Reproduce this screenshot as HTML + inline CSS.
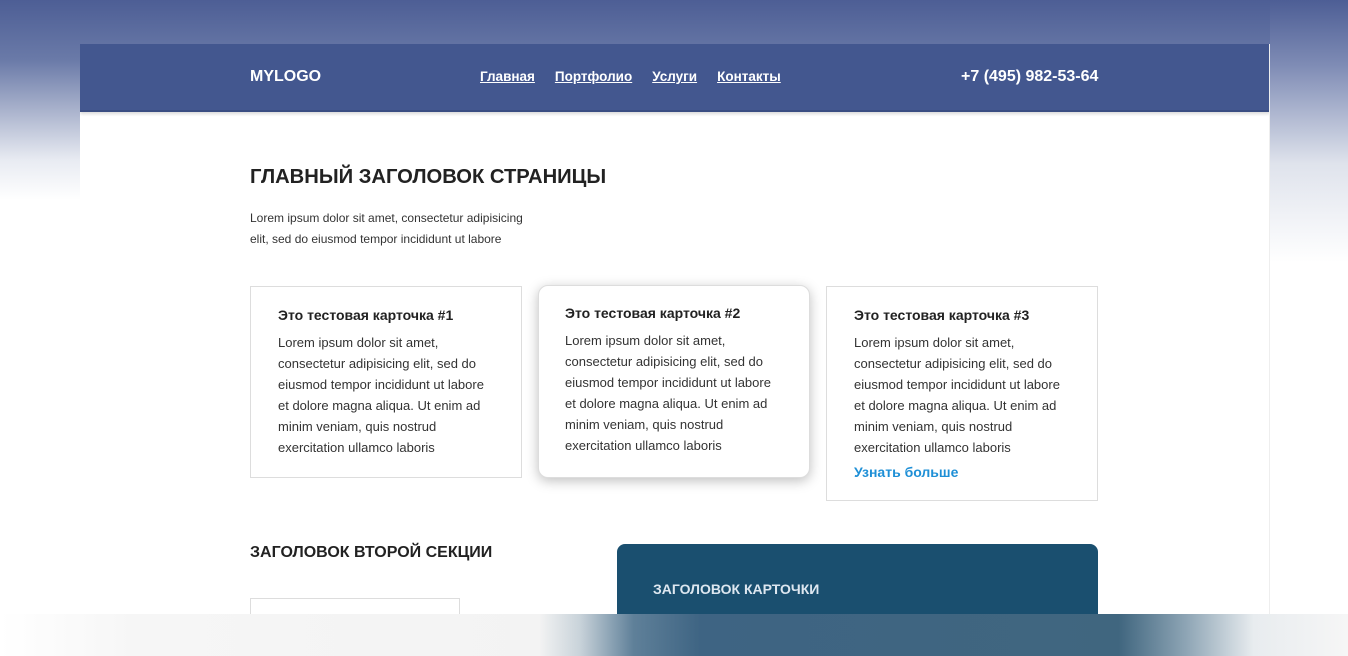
<!DOCTYPE html>
<html><head><meta charset="utf-8"><style>
*{margin:0;padding:0;box-sizing:border-box}
body{width:1348px;height:656px;overflow:hidden;position:relative;background:#fff;font-family:"Liberation Sans",Arial,sans-serif;color:#222}
.bgtop{position:absolute;left:0;top:0;width:1348px;height:200px;background:linear-gradient(180deg,#4d5e95 0%,#6a7aa8 30%,#a9b2cc 55%,#e8ebf2 80%,#fff 100%)}
.bgright{position:absolute;left:1270px;top:0;width:78px;height:656px;background:linear-gradient(180deg,#4d5e95 0%,#7f8cb5 10%,#dfe3ec 25%,#fff 40%,#fff 100%)}
.page{position:absolute;left:80px;top:44px;width:1190px;height:570px;background:#fff;overflow:hidden;border-right:1px solid #eee}
.hdr{position:absolute;left:0;top:0;width:1190px;height:68px;background:#43578f;border-bottom:2px solid #3a4d82;box-shadow:0 2px 3px rgba(0,0,0,.15)}
.hdr .logo{position:absolute;left:170px;top:24px;color:#fff;font-weight:bold;font-size:16px}
.hdr nav{position:absolute;left:400px;top:25px;font-size:13.5px;font-weight:bold}
.hdr nav a{color:#fff;text-decoration:underline;margin-right:20px}
.hdr .ph{position:absolute;left:881px;top:24px;color:#fff;font-weight:bold;font-size:16px}
h1{position:absolute;left:170px;top:122px;font-size:20.2px;font-weight:bold;color:#222}
.lead{position:absolute;left:170px;top:164px;font-size:12px;line-height:21px;color:#333;width:292px}
.card{position:absolute;background:#fff;border:1px solid #ddd;padding:20px 27px}
.card h3{font-size:14px;font-weight:bold;margin-bottom:9px;color:#222}
.card p{font-size:13px;line-height:21px;color:#333}
.card a{display:block;color:#1e8fd6;font-weight:bold;font-size:14px;margin-top:6px;text-decoration:none}
h2{position:absolute;left:170px;top:500px;font-size:16px;font-weight:bold;color:#222}
.inp{position:absolute;left:170px;top:554px;width:210px;height:40px;border:1px solid #ddd}
.dark{position:absolute;left:537px;top:500px;width:481px;height:120px;background:#1a4f6f;border-radius:8px}
.dark span{position:absolute;left:36px;top:37px;color:#dde7f0;font-weight:bold;font-size:14px}
.bot{position:absolute;left:0;top:614px;width:1348px;height:42px;background:linear-gradient(90deg,#fff 0%,#f6f6f6 10%,#f3f3f3 40%,#c9d3da 43%,#5f8099 47%,#3e6483 52%,#40667f 83%,#8ea5b5 88%,#e8ecef 93%,#f6f6f6 100%)}
</style></head><body>
<div class="bgtop"></div><div class="bgright"></div>
<div class="page">
<div class="hdr"><div class="logo">MYLOGO</div>
<nav><a>Главная</a><a>Портфолио</a><a>Услуги</a><a>Контакты</a></nav>
<div class="ph">+7 (495) 982-53-64</div></div>
<h1>ГЛАВНЫЙ ЗАГОЛОВОК СТРАНИЦЫ</h1>
<div class="lead">Lorem ipsum dolor sit amet, consectetur adipisicing elit, sed do eiusmod tempor incididunt ut labore</div>
<div class="card" style="left:170px;top:242px;width:272px;height:192px"><h3>Это тестовая карточка #1</h3><p>Lorem ipsum dolor sit amet, consectetur adipisicing elit, sed do eiusmod tempor incididunt ut labore et dolore magna aliqua. Ut enim ad minim veniam, quis nostrud exercitation ullamco laboris</p></div>
<div class="card" style="left:458px;top:241px;width:272px;height:193px;border-radius:10px;box-shadow:0 3px 12px rgba(0,0,0,.25);padding:19px 26px"><h3>Это тестовая карточка #2</h3><p>Lorem ipsum dolor sit amet, consectetur adipisicing elit, sed do eiusmod tempor incididunt ut labore et dolore magna aliqua. Ut enim ad minim veniam, quis nostrud exercitation ullamco laboris</p></div>
<div class="card" style="left:746px;top:242px;width:272px;height:215px"><h3>Это тестовая карточка #3</h3><p>Lorem ipsum dolor sit amet, consectetur adipisicing elit, sed do eiusmod tempor incididunt ut labore et dolore magna aliqua. Ut enim ad minim veniam, quis nostrud exercitation ullamco laboris</p><a>Узнать больше</a></div>
<h2>ЗАГОЛОВОК ВТОРОЙ СЕКЦИИ</h2>
<div class="inp"></div>
<div class="dark"><span>ЗАГОЛОВОК КАРТОЧКИ</span></div>
</div>
<div class="bot"></div>
</body></html>
